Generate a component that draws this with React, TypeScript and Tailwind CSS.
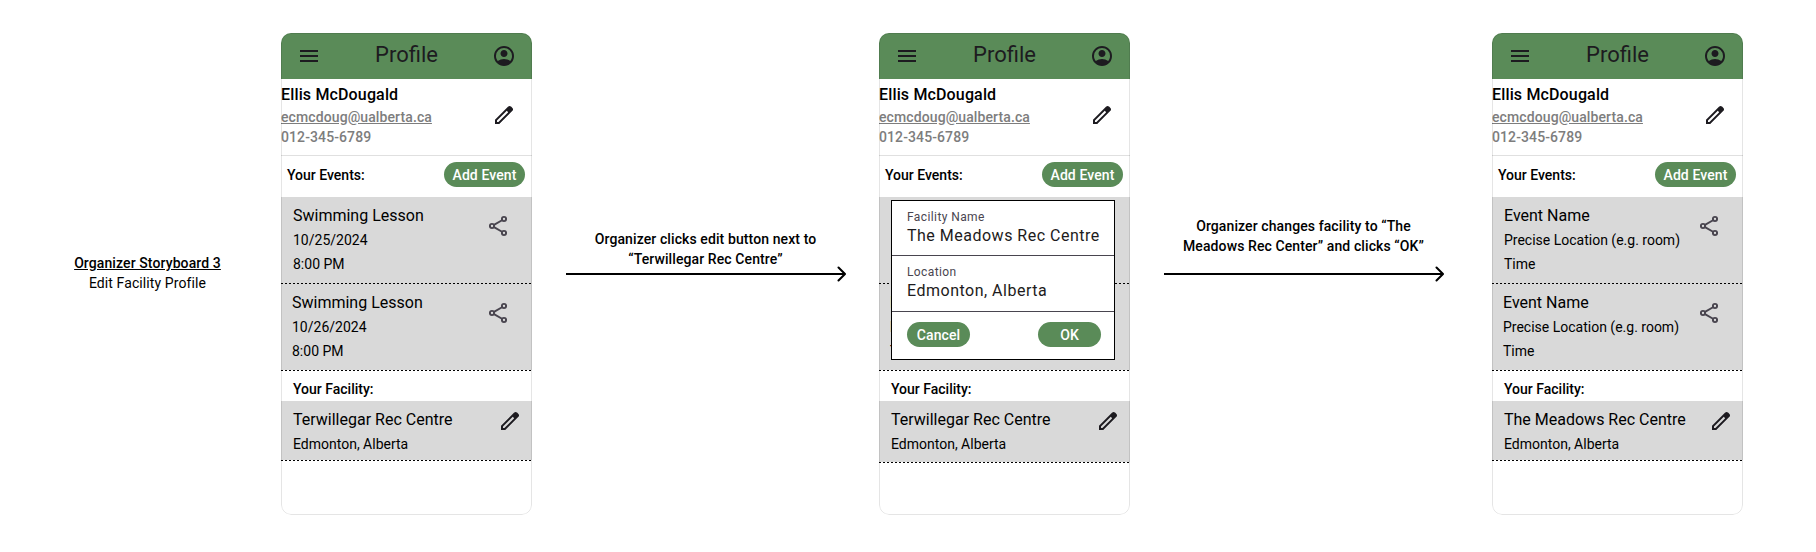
import React from "react";

const MenuIcon = () => (
  <svg viewBox="0 0 24 24" className="size-6 shrink-0" fill="#1D1B20">
    <path d="M3 18v-2h18v2H3Zm0-5v-2h18v2H3Zm0-5V6h18v2H3Z" />
  </svg>
);

const AccountIcon = () => (
  <svg viewBox="0 0 24 24" className="size-6 shrink-0" fill="#1D1B20">
    <path d="M5.85 17.1q1.275-.975 2.85-1.538T12 15t3.3.563 2.85 1.537q.875-1.025 1.363-2.325T20 12q0-3.325-2.337-5.663T12 4 6.337 6.338 4 12q0 1.475.488 2.775T5.85 17.1ZM12 13q-1.475 0-2.488-1.013T8.5 9.5t1.013-2.488T12 6t2.488 1.013T15.5 9.5t-1.013 2.488T12 13Zm0 9q-2.075 0-3.9-.788t-3.175-2.137-2.137-3.175T2 12t.788-3.9 2.137-3.175T8.1 2.788 12 2t3.9.788 3.175 2.137T21.213 8.1 22 12t-.788 3.9-2.137 3.175-3.175 2.137T12 22Z" />
  </svg>
);

const EditIcon = () => (
  <svg viewBox="0 0 24 24" className="size-6 shrink-0" fill="#1D1B20">
    <path d="M5 19h1.425L16.2 9.225 14.775 7.8 5 17.575V19Zm-2 2v-4.25L16.2 3.575q.3-.275.663-.425t.762-.15q.4 0 .775.15t.65.45L20.425 5q.3.275.438.65T21 6.4q0 .4-.138.763t-.437.662L7.25 21H3Z" />
  </svg>
);

const ShareIcon = () => (
  <svg viewBox="0 0 24 24" className="size-6 shrink-0" fill="none" stroke="#49454F" strokeWidth="1.9">
    <circle cx="18" cy="5" r="2.1" />
    <circle cx="6" cy="12" r="2.1" />
    <circle cx="18" cy="19" r="2.1" />
    <path d="M8 10.900 16 6.200M8 13.100l8 4.700" />
  </svg>
);

const Dashes = () => (
  <div className="h-px w-full bg-[repeating-linear-gradient(90deg,#000_0_2.5px,transparent_2.5px_4px)]" />
);

const Pill = ({ className, children }: { className: string; children: React.ReactNode }) => (
  <button
    className={`flex h-[25px] items-center justify-center rounded-full bg-[#5A8B58] text-sm font-medium tracking-[0.1px] text-white ${className}`}
  >
    {children}
  </button>
);

type EventInfo = { title: string; detail: string; time: string };

const EventRow = ({ event, className }: { event: EventInfo; className: string }) => (
  <div className={`flex h-[86px] justify-between pr-[22.5px] ${className}`}>
    <div className="pt-[7px]">
      <p className="text-base leading-6">{event.title}</p>
      <p className="text-sm leading-6">{event.detail}</p>
      <p className="text-sm leading-6">{event.time}</p>
    </div>
    <div className="pt-[17px]">
      <ShareIcon />
    </div>
  </div>
);

const Field = ({ label, value, className }: { label: string; value: string; className: string }) => (
  <div className={`border-b border-[#49454F] pt-2 pl-[15px] ${className}`}>
    <p className="-mb-px text-xs leading-4 tracking-[0.4px] text-[#49454F]">{label}</p>
    <p className="text-base leading-6 tracking-[0.5px] whitespace-nowrap text-[#1D1B20]">{value}</p>
  </div>
);

const FacilityDialog = () => (
  <div className="absolute top-[167px] left-3 h-[160px] w-[224px] border border-black bg-white">
    <Field label="Facility Name" value="The Meadows Rec Centre" className="h-[55px]" />
    <Field label="Location" value="Edmonton, Alberta" className="h-14" />
    <div className="flex justify-between pt-2.5 pr-[13px] pl-[15px]">
      <Pill className="w-[63px]">Cancel</Pill>
      <Pill className="w-[63px]">OK</Pill>
    </div>
  </div>
);

type PhoneProps = {
  events: EventInfo[];
  facility: string;
  facilityHeight: string;
  dialog?: boolean;
};

const Phone = ({ events, facility, facilityHeight, dialog }: PhoneProps) => (
  <div className="relative mt-[33px] h-[482px] w-[251px] shrink-0 overflow-hidden rounded-[10px] bg-white">
    <header className="flex h-[46px] items-start justify-between bg-[#5A8B58] px-4">
      <div className="pt-[11px]">
        <MenuIcon />
      </div>
      <h1 className="pt-2 text-[22px] leading-7 text-[#1D1B20]">Profile</h1>
      <div className="pt-[11px]">
        <AccountIcon />
      </div>
    </header>
    <section className="flex h-[76px] justify-between pt-1 pr-4">
      <div>
        <p className="text-base leading-6 font-medium tracking-[0.15px]">Ellis McDougald</p>
        <p className="text-sm leading-5 font-medium tracking-[0.1px] text-[#7D7D7D] underline">
          ecmcdoug@ualberta.ca
        </p>
        <p className="text-sm leading-5 font-medium tracking-[0.1px] text-[#7D7D7D]">012-345-6789</p>
      </div>
      <div className="pt-5">
        <EditIcon />
      </div>
    </section>
    <section className="flex h-[42px] items-start justify-between border-t border-[#E0E0E0] pt-1.5 pr-[7px] pl-1.5">
      <p className="pt-[3px] text-sm leading-5 font-medium">Your Events:</p>
      <Pill className="w-[81px]">Add Event</Pill>
    </section>
    <section className="bg-[#D9D9D9]">
      <EventRow event={events[0]} className="pl-3" />
      <Dashes />
      <EventRow event={events[1]} className="pl-[11px]" />
    </section>
    <Dashes />
    <p className="h-[30px] pt-2 pl-3 text-sm leading-5 font-medium">Your Facility:</p>
    <section className={`flex justify-between bg-[#D9D9D9] pr-[10px] pl-3 ${facilityHeight}`}>
      <div className="pt-[7px]">
        <p className="text-base leading-6">{facility}</p>
        <p className="text-sm leading-6">Edmonton, Alberta</p>
      </div>
      <div className="pt-2">
        <EditIcon />
      </div>
    </section>
    <Dashes />
    <div className="pointer-events-none absolute inset-0 rounded-[10px] border border-black/10" />
    {dialog && <FacilityDialog />}
  </div>
);

const Step = ({ lines, className }: { lines: string[]; className: string }) => (
  <div
    className={`pr-px text-center text-sm leading-5 font-medium tracking-[0.1px] whitespace-nowrap ${className}`}
  >
    {lines.map((line) => (
      <p key={line}>{line}</p>
    ))}
  </div>
);

const Arrow = () => (
  <svg viewBox="0 0 280 16" className="h-4 w-[280px]" fill="none" stroke="#000" strokeWidth="2">
    <path d="M0 8h279" />
    <path d="m272.500 1.500 6.500 6.500-6.500 6.500" strokeLinecap="round" strokeLinejoin="round" />
  </svg>
);

const swimming: EventInfo[] = [
  { title: "Swimming Lesson", detail: "10/25/2024", time: "8:00 PM" },
  { title: "Swimming Lesson", detail: "10/26/2024", time: "8:00 PM" },
];

const placeholder: EventInfo[] = [
  { title: "Event Name", detail: "Precise Location (e.g. room)", time: "Time" },
  { title: "Event Name", detail: "Precise Location (e.g. room)", time: "Time" },
];

export default function App() {
  return (
    <main className="flex h-[552px] w-[1816px] items-start overflow-hidden bg-white font-['Roboto',sans-serif] text-black">
      <div className="mt-[253px] mr-[53px] ml-[67px] w-[161px] shrink-0 text-center text-sm leading-5 whitespace-nowrap">
        <p className="font-medium tracking-[0.1px] underline">Organizer Storyboard 3</p>
        <p className="tracking-[0.1px]">Edit Facility Profile</p>
      </div>
      <Phone events={swimming} facility="Terwillegar Rec Centre" facilityHeight="h-[59px]" />
      <div className="mt-[229px] mr-[33px] ml-[34px] w-[280px] shrink-0">
        <Step lines={["Organizer clicks edit button next to", "“Terwillegar Rec Centre”"]} className="h-[37px]" />
        <Arrow />
      </div>
      <Phone events={placeholder} facility="Terwillegar Rec Centre" facilityHeight="h-[61px]" dialog />
      <div className="mt-[216px] mr-12 ml-[34px] w-[280px] shrink-0">
        <Step lines={["Organizer changes facility to “The", "Meadows Rec Center” and clicks “OK”"]} className="h-[50px]" />
        <Arrow />
      </div>
      <Phone events={placeholder} facility="The Meadows Rec Centre" facilityHeight="h-[59px]" />
    </main>
  );
}
